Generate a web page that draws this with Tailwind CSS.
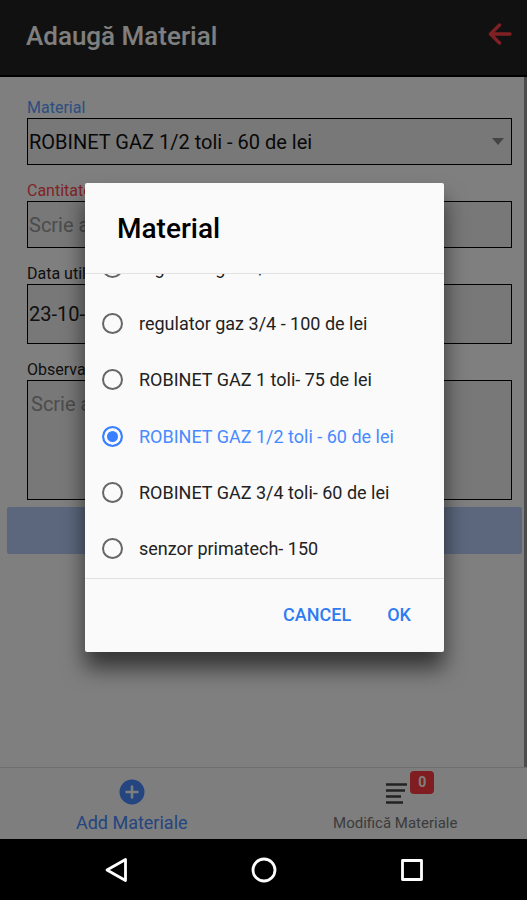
<!DOCTYPE html>
<html lang="ro">
<head>
<meta charset="utf-8">
<meta name="viewport" content="width=device-width, initial-scale=1">
<title>Adaugă Material</title>
<script src="https://cdn.jsdelivr.net/npm/@tailwindcss/browser@4"></script>
</head>
<body class="bg-black font-[Roboto,sans-serif]">
<div class="flex min-h-screen flex-col">
  <div class="relative flex flex-1 flex-col bg-white">
    <header class="flex h-[77px] items-center justify-between border-b-2 border-black bg-[#222] pr-[15px] pl-[26px]">
      <h1 class="pb-[2px] text-[26px] font-medium text-white">Adaugă Material</h1>
      <button type="button" aria-label="Înapoi" class="pb-2">
        <svg class="size-6" viewBox="0 0 24 24" fill="none" stroke="#ff4048" stroke-width="3.4" stroke-linecap="round" stroke-linejoin="round"><path d="M22 12H3M11.500 3 2.500 12l9 9"/></svg>
      </button>
    </header>

    <main class="flex-1 border-r-3 border-[#999] pt-[21px]">
      <form>
        <div class="mr-3 ml-[27px] flex flex-col gap-4 text-[20px]">
          <div>
            <label for="material" class="block text-[16px] leading-5 text-[#5a9cff]">Material</label>
            <div class="relative">
              <select id="material" class="h-[47px] w-full appearance-none border border-black bg-[#f0f0f0] pl-px text-[#111]">
                <option>ROBINET GAZ 1/2 toli - 60 de lei</option>
              </select>
              <svg class="pointer-events-none absolute top-5 right-2 h-[7px] w-3" viewBox="0 0 12 7"><path d="M0 0h12L6 7z" fill="#888"/></svg>
            </div>
          </div>
          <div>
            <label for="cantitate" class="block text-[16px] leading-5 text-[#ff4850]">Cantitate</label>
            <input id="cantitate" type="text" placeholder="Scrie aici" class="block h-[47px] w-full border border-black bg-[#f0f0f0] pl-px placeholder:text-[#999]">
          </div>
          <div>
            <label for="data" class="block text-[16px] leading-5 text-[#222]">Data utilizare</label>
            <input id="data" type="text" value="23-10-2020" class="block h-[60px] w-full border border-black bg-[#f0f0f0] pl-px text-[#222]">
          </div>
          <div>
            <label for="observatii" class="block text-[16px] leading-5 text-[#222]">Observații</label>
            <textarea id="observatii" placeholder="Scrie aici" class="block h-[120px] w-full resize-none border border-black bg-[#f0f0f0] px-[3px] py-2 placeholder:text-[#999]"></textarea>
          </div>
        </div>
        <div class="mt-[7px] mr-[2px] ml-[7px]">
          <button type="button" aria-label="Adaugă" class="block h-[47px] w-full rounded-xs bg-[#b8cffb]"></button>
        </div>
      </form>
    </main>

    <nav class="grid h-[72px] grid-cols-2 border-t border-[#ddd] bg-[#fcfcfc]">
      <a href="#add" class="flex flex-col items-center pt-[11px] text-[18px] text-[#488aff]">
        <svg class="size-[26px]" viewBox="0 0 26 26"><circle cx="13" cy="13" r="12.500" fill="currentColor"/><path d="M13 6.500v13M6.500 13h13" stroke="#fcfcfc" stroke-width="2.500"/></svg>
        <span class="leading-9">Add Materiale</span>
      </a>
      <a href="#edit" class="flex flex-col items-center pt-[11px] text-[15px] text-[#777]">
        <span class="relative">
          <svg class="size-[26px]" viewBox="0 0 26 26" stroke="#444" stroke-width="2.400"><path d="M4 5.500h21M4 11.500h19M4 17.500h15M4 23.500h17"/></svg>
          <span class="absolute -top-2 left-7 flex h-[23px] w-6 items-center justify-center rounded-sm bg-[#ff3a40] text-[14px] font-bold text-white">0</span>
        </span>
        <span class="leading-9">Modifică Materiale</span>
      </a>
    </nav>

    <div class="absolute inset-0 flex items-center justify-center bg-black/50 pb-1 pl-[2px]">
      <div role="dialog" aria-labelledby="dialog-title" class="w-[359px] max-w-full overflow-hidden rounded-xs bg-[#fafafa] shadow-[0_16px_22px_0px_rgba(0,0,0,0.6)]">
        <h2 id="dialog-title" class="px-8 pt-[26px] pb-6 text-[28px] leading-10 font-medium text-black">Material</h2>
        <div class="flex h-[306px] flex-col justify-end overflow-hidden border-y border-[#e2e2e2] pb-px text-[18px] text-[#222]">
          <div class="grid h-[338px] shrink-0 grid-rows-6">
            <label class="flex items-center gap-4 px-[17px]"><input type="radio" name="m" class="size-[21px] appearance-none rounded-full border-2 border-[#666]">regulator gaz 1/2</label>
            <label class="flex items-center gap-4 px-[17px]"><input type="radio" name="m" class="size-[21px] appearance-none rounded-full border-2 border-[#666]">regulator gaz 3/4 - 100 de lei</label>
            <label class="flex items-center gap-4 px-[17px]"><input type="radio" name="m" class="size-[21px] appearance-none rounded-full border-2 border-[#666]">ROBINET GAZ 1 toli- 75 de lei</label>
            <label class="flex items-center gap-4 px-[17px] text-[#488aff]"><input type="radio" name="m" checked class="size-[21px] appearance-none rounded-full border-2 border-[#3880ff] bg-[#3880ff] shadow-[inset_0_0_0_3px_#fafafa]">ROBINET GAZ 1/2 toli - 60 de lei</label>
            <label class="flex items-center gap-4 px-[17px]"><input type="radio" name="m" class="size-[21px] appearance-none rounded-full border-2 border-[#666]">ROBINET GAZ 3/4 toli- 60 de lei</label>
            <label class="flex items-center gap-4 px-[17px]"><input type="radio" name="m" class="size-[21px] appearance-none rounded-full border-2 border-[#666]">senzor primatech- 150</label>
          </div>
        </div>
        <div class="flex h-[73px] items-center justify-end gap-9 px-[33px] pb-[3px] text-[18px] font-medium text-[#2f7cf0]">
          <button type="button">CANCEL</button>
          <button type="button">OK</button>
        </div>
      </div>
    </div>
  </div>

  <footer class="flex h-[61px] items-center justify-center gap-[122px] bg-black">
    <button type="button" aria-label="Înapoi"><svg class="size-[26px]" viewBox="0 0 26 26" fill="none" stroke="#fff" stroke-width="2.800" stroke-linejoin="round"><path d="M22.500 2.500v21L4 13z"/></svg></button>
    <button type="button" aria-label="Acasă"><svg class="size-[26px]" viewBox="0 0 26 26" fill="none" stroke="#fff" stroke-width="2.800"><circle cx="13" cy="13" r="11"/></svg></button>
    <button type="button" aria-label="Recente"><svg class="size-[26px]" viewBox="0 0 26 26" fill="none" stroke="#fff" stroke-width="2.800" stroke-linejoin="round"><path d="M3.500 3.500h19v19h-19z"/></svg></button>
  </footer>
</div>
</body>
</html>
